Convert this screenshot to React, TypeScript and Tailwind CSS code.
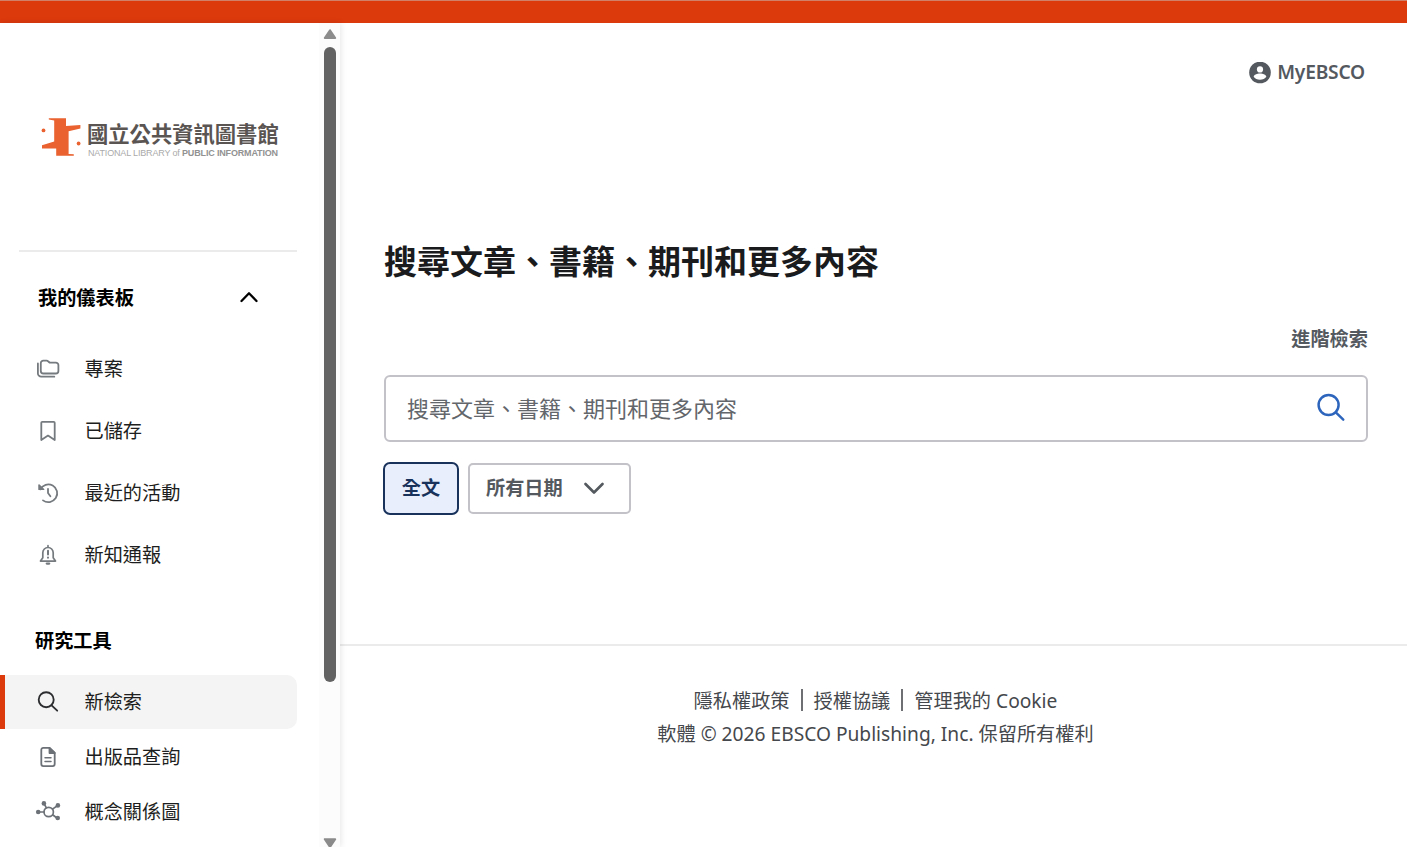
import React from "react";

type IconProps = { className?: string };

const stroke = {
  fill: "none",
  stroke: "currentColor",
  strokeLinecap: "round" as const,
  strokeLinejoin: "round" as const,
};

const FoldersIcon = () => (
  <svg width="24" height="24" viewBox="0 0 24 24" {...stroke} strokeWidth="1.8">
    <path d="M7.300 3.700h3.400c.6 0 1 .2 1.400.6l.8.7c.4.4.9.6 1.500.6h5.500a2.500 2.500 0 0 1 2.500 2.500v5.900a2.500 2.500 0 0 1-2.500 2.500H7.300a2.500 2.500 0 0 1-2.500-2.500V6.200a2.500 2.500 0 0 1 2.500-2.500Z" />
    <path d="M1.900 6.400v10a3.300 3.300 0 0 0 3.300 3.300H18.300" />
  </svg>
);

const BookmarkIcon = () => (
  <svg width="24" height="24" viewBox="0 0 24 24" {...stroke} strokeWidth="1.8">
    <path d="M5.300 3.800c0-.6.4-1 1-1h11.400c.6 0 1 .4 1 1v17.300L12 16.600l-6.700 4.500Z" />
  </svg>
);

const HistoryIcon = () => (
  <svg width="24" height="24" viewBox="0 0 24 24" {...stroke} strokeWidth="1.8">
    <path d="M4.300 8.400a8.900 8.900 0 1 1 2.700 11" />
    <path d="M12 7.800v4.200l2.400 3.200" />
    <path d="M2.900 3.800v4.700h4.900Z" fill="currentColor" strokeWidth="1.200" />
  </svg>
);

const BellIcon = () => (
  <svg width="24" height="24" viewBox="0 0 24 24" {...stroke} strokeWidth="1.7">
    <path d="M12 2.700v1.300M6.800 14.800V9.700a5.200 5.200 0 0 1 10.400 0v5.100l2.300 3.300h-15Z" />
    <path d="M12 7.800v3.700M12 14.500v.3" strokeWidth="2" />
    <path d="M10.800 20.600h2.400" strokeWidth="2.300" />
  </svg>
);

const SearchIcon = ({ className }: IconProps) => (
  <svg className={className} viewBox="0 0 24 24" {...stroke} strokeWidth="1.85">
    <circle cx="10.200" cy="9.700" r="7.500" />
    <path d="m15.600 15.300 5.600 5.400" />
  </svg>
);

const DocumentIcon = () => (
  <svg width="24" height="24" viewBox="0 0 24 24" {...stroke} strokeWidth="1.8">
    <path d="M13.500 2.900H7.300a2 2 0 0 0-2 2v14.200a2 2 0 0 0 2 2h9.400a2 2 0 0 0 2-2V8Z" />
    <path d="M13.500 2.900V8h5.200Z" fill="currentColor" />
    <path d="M9 12.700h6M9 16.400h6" strokeWidth="1.500" />
  </svg>
);

const ConceptIcon = () => (
  <svg className="shrink-0" width="26" height="24" viewBox="0 0 26 24" {...stroke} strokeWidth="1.7">
    <circle cx="13.700" cy="12" r="4.700" />
    <path d="M3.500 12h5.500M9 3.700l2.300 4M23 5.200l-5.500 3.900M22.600 18.500l-5-3.700" />
    <g fill="currentColor" stroke="none">
      <circle cx="3.200" cy="12" r="2.300" />
      <circle cx="8.900" cy="3.400" r="2.300" />
      <circle cx="22.900" cy="5.400" r="2.300" />
      <circle cx="22.700" cy="18" r="2.300" />
    </g>
  </svg>
);

const UserIcon = () => (
  <svg width="22" height="22" viewBox="0 0 22 22">
    <circle cx="11" cy="10.500" r="10.800" fill="#54595f" />
    <circle cx="11" cy="7.400" r="3.100" fill="#fff" />
    <path d="M4.700 14.800c0-2 3.400-3.300 6.300-3.300s6.300 1.300 6.300 3.300c-1.200 1.800-3.600 3-6.300 3s-5.100-1.200-6.300-3Z" fill="#fff" />
  </svg>
);

const LogoMark = () => (
  <svg className="shrink-0" width="40" height="40" viewBox="0 0 40 40" fill="#e9622f">
    <path d="M7.800 1.300H25V9l14.400-1v3.600L27.600 14.300V37l5.200.3v1.500H15.200v-7.200H1v-3.400l12.200-3.700V3.600L7.800 2.500Z" />
    <circle cx="2.500" cy="13.400" r="1.900" />
    <circle cx="37.600" cy="26.500" r="1.900" />
  </svg>
);

const dashboard = [
  { label: "專案", icon: <FoldersIcon /> },
  { label: "已儲存", icon: <BookmarkIcon /> },
  { label: "最近的活動", icon: <HistoryIcon /> },
  { label: "新知通報", icon: <BellIcon /> },
];

const tools = [
  { label: "新檢索", icon: <SearchIcon className="h-6 w-6" />, active: true },
  { label: "出版品查詢", icon: <DocumentIcon />, active: false },
  { label: "概念關係圖", icon: <ConceptIcon />, active: false },
];

function Sidebar() {
  return (
    <aside className="relative z-10 flex w-[340px] shrink-0 bg-white shadow-[1px_0_6px_rgba(0,0,0,0.1)]">
      <div className="flex w-[319px] flex-col overflow-hidden">
        <div className="ml-[19px] flex h-[229px] w-[278px] shrink-0 border-b-2 border-[#ebebeb] pt-[94px] pl-[22px]">
          <LogoMark />
          <div className="ml-1.5 pt-1 whitespace-nowrap">
            <div className="text-[21.3px] leading-[25px] font-bold text-[#5a5452]">國立公共資訊圖書館</div>
            <div className="mt-px ml-px font-['Liberation_Sans',sans-serif] text-[9px] leading-3 tracking-[-0.16px] text-[#aaa]">
              NATIONAL LIBRARY of <span className="font-bold text-[#929292]">PUBLIC INFORMATION</span>
            </div>
          </div>
        </div>

        <button className="flex h-[86px] shrink-0 items-center justify-between pt-1 pr-[61px] pl-[38px] text-[19.2px] leading-7 font-bold text-black">
          <span className="pt-[3px]">我的儀表板</span>
          <svg width="18" height="12" viewBox="0 0 18 12" {...stroke} strokeWidth="2.300">
            <path d="m1.500 10 7.500-7.700 7.500 7.700" />
          </svg>
        </button>

        <nav className="flex shrink-0 flex-col">
          {dashboard.map((item) => (
            <a key={item.label} className="flex h-[62px] items-center pl-9">
              <span className="flex w-6 justify-center text-[#757a7f]">{item.icon}</span>
              <span className="ml-[24.5px] text-[19.2px] leading-7 text-[#1d1e20]">{item.label}</span>
            </a>
          ))}
        </nav>

        <h2 className="flex h-[89px] shrink-0 items-center pt-[21px] pl-[35px] text-[19.2px] leading-7 font-bold text-black">
          研究工具
        </h2>

        <nav className="flex shrink-0 flex-col">
          {tools.map((item) => (
            <a
              key={item.label}
              className={
                item.active
                  ? "mr-[22px] flex h-[54px] items-center rounded-r-[10px] border-l-[5px] border-[#dc390d] bg-[#f4f4f4] pl-[31px] text-[#2b2d2f]"
                  : "flex h-[55px] items-center pt-px pl-9 text-[#6c7177]"
              }
            >
              <span className="flex w-6 justify-center">{item.icon}</span>
              <span className="ml-[24.5px] text-[19.2px] leading-7 text-[#1d1e20]">{item.label}</span>
            </a>
          ))}
        </nav>
      </div>

      <div className="flex w-[21px] flex-col items-center bg-[#fcfcfc] pt-[5px]">
        <svg className="shrink-0" width="14" height="12" viewBox="0 0 14 12" fill="#8b8b8b" stroke="#8b8b8b" strokeWidth="2" strokeLinejoin="round">
          <path d="M7 2.200 12.200 10H1.800Z" />
        </svg>
        <div className="mt-[7px] h-[635px] w-3 shrink-0 rounded-full bg-[#636363]" />
        <svg className="mt-[155px] shrink-0" width="14" height="12" viewBox="0 0 14 12" fill="#8b8b8b" stroke="#8b8b8b" strokeWidth="2" strokeLinejoin="round">
          <path d="M1.800 2.200h10.400L7 10Z" />
        </svg>
      </div>
    </aside>
  );
}

export default function App() {
  return (
    <div className="flex h-[847px] flex-col overflow-hidden bg-white font-['Noto_Sans','Noto_Sans_CJK_TC',sans-serif]">
      <header className="h-[22.5px] shrink-0 border-t border-[#d08068] bg-[#dc390d]" />
      <div className="flex min-h-0 flex-1">
        <Sidebar />
        <div className="flex flex-1 flex-col">
          <div className="flex h-[100px] justify-end pr-[42px]">
            <a className="flex h-[100px] items-center gap-1.5 text-[19.2px] font-semibold tracking-[-0.2px] text-[#54595f]">
              <UserIcon />
              MyEBSCO
            </a>
          </div>

          <main className="flex h-[521px] shrink-0 flex-col pr-[39px] pl-11">
            <h1 className="mt-[114px] h-12 text-[33px] leading-[49px] font-bold text-[#1a1b1d]">
              搜尋文章、書籍、期刊和更多內容
            </h1>
            <a className="mt-[40px] h-7 self-end text-[19.2px] leading-7 font-semibold text-[#54595f]">進階檢索</a>
            <div className="mt-[22px] flex h-[67px] shrink-0 items-center justify-between rounded-[6px] border-2 border-[#c2c2c8] pr-[19px] pl-[21px]">
              <span className="text-[22px] leading-8 text-[#63666b]">搜尋文章、書籍、期刊和更多內容</span>
              <SearchIcon className="h-8 w-8 text-[#2d65bd]" />
            </div>
            <div className="mt-5 flex h-[53px] shrink-0 items-center gap-[9px]">
              <button className="ml-[-1px] h-[53px] w-[76px] rounded-[7px] border-2 border-[#19325c] bg-[#e8eefb] text-[19.2px] leading-7 font-bold text-[#19325c]">
                全文
              </button>
              <button className="flex h-[51px] w-[163px] items-center justify-between rounded-[5px] border-2 border-[#c2c2c8] pr-[25px] pl-4 text-[19.2px] leading-7 font-semibold text-[#54595f]">
                所有日期
                <svg width="20" height="13" viewBox="0 0 20 13" {...stroke} strokeWidth="2.600">
                  <path d="m1.500 2 8.500 8.500L18.500 2" />
                </svg>
              </button>
            </div>
          </main>

          <footer className="flex-1 border-t-2 border-[#ebebeb] pt-[38px] pl-1 text-center text-[19.2px] leading-[33px] text-[#45484c]">
            <div className="flex h-[33px] items-center justify-center gap-[11px]">
              <a>隱私權政策</a>
              <span className="h-[22px] w-0.5 bg-[#6d6f72]" />
              <a>授權協議</a>
              <span className="h-[22px] w-0.5 bg-[#6d6f72]" />
              <a>管理我的 Cookie</a>
            </div>
            <p>軟體 © 2026 EBSCO Publishing, Inc. 保留所有權利</p>
          </footer>
        </div>
      </div>
    </div>
  );
}
